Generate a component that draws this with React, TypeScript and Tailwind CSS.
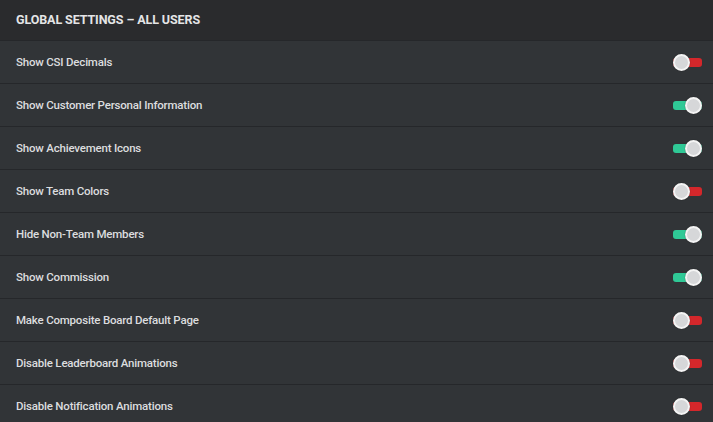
import { useState } from "react";

type Setting = { label: string; on: boolean };

const SETTINGS: Setting[] = [
  { label: "Show CSI Decimals", on: false },
  { label: "Show Customer Personal Information", on: true },
  { label: "Show Achievement Icons", on: true },
  { label: "Show Team Colors", on: false },
  { label: "Hide Non-Team Members", on: true },
  { label: "Show Commission", on: true },
  { label: "Make Composite Board Default Page", on: false },
  { label: "Disable Leaderboard Animations", on: false },
  { label: "Disable Notification Animations", on: false },
];

function Toggle({ on, onClick }: { on: boolean; onClick: () => void }) {
  return (
    <button
      type="button"
      onClick={onClick}
      className="relative flex h-[17px] w-[29px] items-center"
    >
      <span
        className={`h-[9px] w-full rounded-[3px] ${on ? "bg-[#2fc996]" : "bg-[#d4272b]"}`}
      />
      <span
        className={`absolute top-0 h-[17px] w-[17px] rounded-full border-2 border-[#f4f4f4] bg-[#d6d7d9] shadow-[0_0_1px_rgba(0,0,0,0.6)] ${
          on ? "right-0" : "left-0"
        }`}
      />
    </button>
  );
}

export default function App() {
  const [settings, setSettings] = useState(SETTINGS);

  const flip = (i: number) =>
    setSettings((s) => s.map((x, j) => (j === i ? { ...x, on: !x.on } : x)));

  return (
    <div className="min-h-screen w-full bg-[#313437] font-['Roboto',sans-serif]">
      <div className="flex h-[40px] items-center bg-[#2a2b2d] px-4">
        <span className="text-[12.5px] font-bold tracking-[-0.1px] text-[#e4e5e6]">
          GLOBAL SETTINGS – ALL USERS
        </span>
      </div>
      {settings.map((s, i) => (
        <div
          key={s.label}
          className="flex h-[43px] items-center justify-between border-t border-[#25272a] pr-[11px] pl-4"
        >
          <span className="pt-[2px] text-[11.5px] font-medium tracking-[-0.2px] text-[#dcdddf]">
            {s.label}
          </span>
          <Toggle on={s.on} onClick={() => flip(i)} />
        </div>
      ))}
    </div>
  );
}
